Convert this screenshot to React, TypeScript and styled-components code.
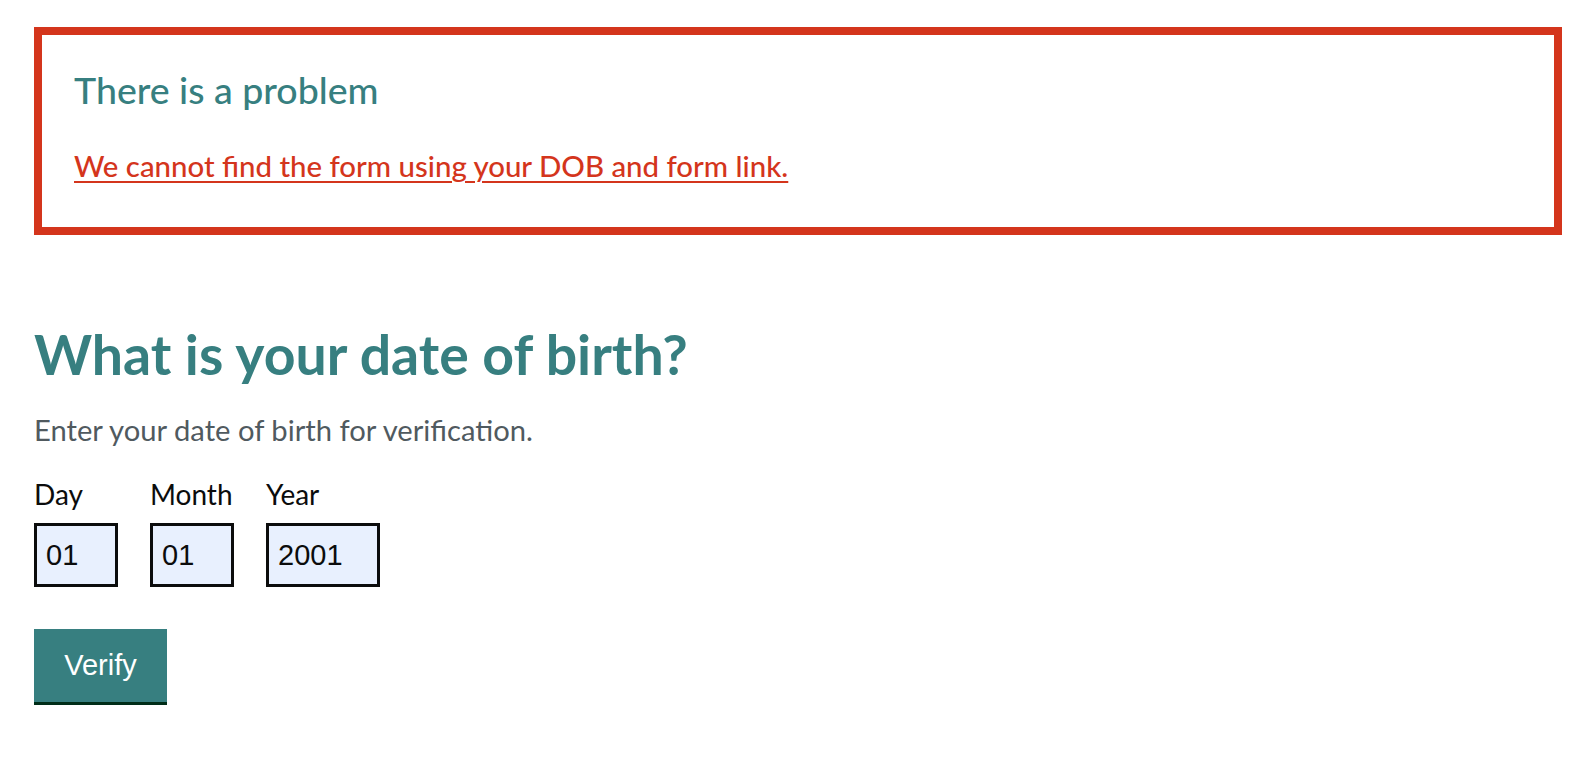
import React, { useState } from 'react'
import styled, { createGlobalStyle } from 'styled-components'

const teal = '#377f80'
const red = '#d4351c'

const GlobalStyle = createGlobalStyle`
  body {
    margin: 0;
    background: #ffffff;
    font-family: Lato, "Noto Sans", sans-serif;
  }
`

const Page = styled.main`
  padding: 27px 20px 40px 34px;
`

const ErrorSummary = styled.div`
  border: 8px solid ${red};
  padding: 33px 32px 43px;
`

const ErrorTitle = styled.h2`
  margin: 0 0 36px;
  color: ${teal};
  font-size: 37.5px;
  font-weight: 500;
  line-height: 44px;
`

const ErrorList = styled.div`
  font-size: 29.4px;
  line-height: 36px;
`

const ErrorLink = styled.a`
  color: ${red};
  font-weight: 500;
  text-decoration: underline;
  text-decoration-thickness: 2px;
  text-underline-offset: 4px;
`

const Title = styled.h1`
  margin: 87px 0 26px;
  color: ${teal};
  font-size: 55.4px;
  font-weight: 700;
  line-height: 64px;
`

const Hint = styled.p`
  margin: 0 0 29px;
  color: #505a5f;
  font-size: 29.2px;
  line-height: 36px;
`

const DateRow = styled.div`
  display: flex;
  gap: 32px;
  margin-bottom: 42px;
`

const Field = styled.div`
  display: flex;
  flex-direction: column;
`

const Label = styled.label`
  color: #0b0c0c;
  font-size: 28px;
  line-height: 34px;
  margin-bottom: 12px;
`

const Input = styled.input<{ $width: number }>`
  box-sizing: border-box;
  width: ${p => p.$width}px;
  height: 64px;
  border: 3px solid #0b0c0c;
  background: #e8f0fe;
  padding: 0 9px;
  font-family: "Liberation Sans", Arial, sans-serif;
  font-size: 29px;
  color: #0b0c0c;
  outline: none;
`

const Button = styled.button`
  box-sizing: border-box;
  width: 133px;
  height: 73px;
  border: none;
  background: ${teal};
  box-shadow: 0 3px 0 #002d18;
  margin-bottom: 3px;
  color: #ffffff;
  font-family: "Liberation Sans", Arial, sans-serif;
  font-size: 29px;
  cursor: pointer;
`

export default function App() {
  const [day, setDay] = useState('01')
  const [month, setMonth] = useState('01')
  const [year, setYear] = useState('2001')
  return (
    <>
      <GlobalStyle />
      <Page>
        <ErrorSummary role="alert">
          <ErrorTitle>There is a problem</ErrorTitle>
          <ErrorList>
            <ErrorLink href="#dob-day">We cannot find the form using your DOB and form link.</ErrorLink>
          </ErrorList>
        </ErrorSummary>
        <Title>What is your date of birth?</Title>
        <Hint>Enter your date of birth for verification.</Hint>
        <DateRow>
          <Field>
            <Label htmlFor="dob-day">Day</Label>
            <Input id="dob-day" $width={84} value={day} onChange={e => setDay(e.target.value)} />
          </Field>
          <Field>
            <Label htmlFor="dob-month">Month</Label>
            <Input id="dob-month" $width={84} value={month} onChange={e => setMonth(e.target.value)} />
          </Field>
          <Field>
            <Label htmlFor="dob-year">Year</Label>
            <Input id="dob-year" $width={114} value={year} onChange={e => setYear(e.target.value)} />
          </Field>
        </DateRow>
        <Button type="button">Verify</Button>
      </Page>
    </>
  )
}
